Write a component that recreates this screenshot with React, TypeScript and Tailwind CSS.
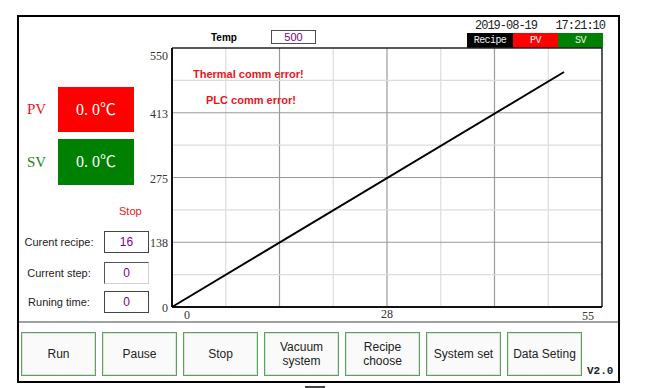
const buttons = ["Run", "Pause", "Stop", "Vacuum\nsystem", "Recipe\nchoose", "System set", "Data Seting"];

const plotLeft = 22;
const plotRight = 452;
const plotBottom = 259;

function TempChart() {
  const colW = (plotRight - plotLeft) / 8;
  const rowH = plotBottom / 8;
  const cols = [1, 2, 3, 4, 5, 6, 7];
  const rows = [1, 2, 3, 4, 5, 6, 7];

  return (
    <svg width={468} height={273} className="overflow-visible">
      {cols.map((i) => (
        <line
          key={"c" + i}
          x1={plotLeft + colW * i}
          x2={plotLeft + colW * i}
          y1={0}
          y2={plotBottom}
          stroke={i % 2 === 0 ? "#9a9a9a" : "#dcdcdc"}
          strokeWidth={1.2}
        />
      ))}
      {rows.map((j) => (
        <line
          key={"r" + j}
          x1={plotLeft}
          x2={plotRight}
          y1={rowH * j}
          y2={rowH * j}
          stroke={j % 2 === 0 ? "#9a9a9a" : "#dcdcdc"}
          strokeWidth={1.2}
        />
      ))}
      <line x1={plotLeft} x2={plotRight} y1={0} y2={0} stroke="#222" strokeWidth={1.5} />
      <line x1={plotRight} x2={plotRight} y1={0} y2={plotBottom} stroke="#222" strokeWidth={1.5} />
      <line x1={plotLeft} x2={plotLeft} y1={0} y2={plotBottom} stroke="#111" strokeWidth={2} />
      <line x1={plotLeft} x2={plotRight} y1={plotBottom} y2={plotBottom} stroke="#111" strokeWidth={2} />

      <line x1={plotLeft} y1={plotBottom} x2={414} y2={24} stroke="#000" strokeWidth={2} />

      <g fontFamily="'Liberation Serif', serif" fontSize={12} fill="#333" textAnchor="end" dominantBaseline="central">
        <text x={18} y={8}>550</text>
        <text x={18} y={66}>413</text>
        <text x={18} y={131}>275</text>
        <text x={18} y={195}>138</text>
        <text x={18} y={260}>0</text>
      </g>
      <g fontFamily="'Liberation Serif', serif" fontSize={12} fill="#333" textAnchor="middle" dominantBaseline="central">
        <text x={37} y={267}>0</text>
        <text x={237} y={266}>28</text>
        <text x={438} y={268}>55</text>
      </g>

      <g fontFamily="'Liberation Sans', Arial, sans-serif" fontSize={11} fontWeight="bold" fill="#e8161c" dominantBaseline="central">
        <text x={43} y={26}>Thermal comm error!</text>
        <text x={56} y={52}>PLC comm error!</text>
      </g>
    </svg>
  );
}

function ValueBox({ value, light }: { value: string; light?: boolean }) {
  return (
    <div
      className={
        light
          ? "ml-[5px] flex h-[22px] w-[45px] items-center justify-center border border-t-[#555] border-l-[#555] border-r-[#d0d0d0] border-b-[#d0d0d0] text-[12px] text-[#800080]"
          : "ml-[5px] flex h-[22px] w-[45px] items-center justify-center border border-[#444] text-[12px] text-[#800080]"
      }
    >
      {value}
    </div>
  );
}

function LeftPanel() {
  return (
    <div className="flex w-[131px] flex-col pt-[70px]">
      <div className="flex h-[45px] items-center">
        <span className="w-[39px] pl-[8px] font-['Liberation_Serif',serif] text-[15px] text-[#e0201e]">PV</span>
        <div className="flex h-full w-[76px] items-center justify-center bg-[#ff0000] font-['Liberation_Serif','Noto_Sans_CJK_SC',serif] text-[16px] text-white">
          0. 0℃
        </div>
      </div>
      <div className="mt-[7px] flex h-[46px] items-center">
        <span className="w-[39px] pl-[8px] font-['Liberation_Serif',serif] text-[15px] text-[#1d7f1d]">SV</span>
        <div className="flex h-full w-[76px] items-center justify-center bg-[#008000] font-['Liberation_Serif','Noto_Sans_CJK_SC',serif] text-[16px] text-white">
          0. 0℃
        </div>
      </div>
      <div className="mt-[19px] pl-[100px] text-[11px] leading-[14px] text-[#e8161c]">Stop</div>
      <div className="mt-[13px] flex items-center">
        <span className="w-[80px] text-center text-[11px] text-[#222]">Curent recipe:</span>
        <ValueBox value="16" />
      </div>
      <div className="mt-[9px] flex items-center">
        <span className="w-[80px] text-center text-[11px] text-[#222]">Current step:</span>
        <ValueBox value="0" light />
      </div>
      <div className="mt-[7px] flex items-center">
        <span className="w-[80px] text-center text-[11px] text-[#222]">Runing time:</span>
        <ValueBox value="0" />
      </div>
    </div>
  );
}

function ChartPanel() {
  return (
    <div className="flex w-[468px] flex-col">
      <div className="flex h-[31px] items-start">
        <div className="w-[121px] pl-[61px] pt-[15px] text-[10px] font-bold leading-[12px] text-black">Temp</div>
        <div className="mt-[13px] flex h-[14px] w-[45px] items-center justify-center border border-[#4a4a5a] text-[11px] leading-none text-[#800080]">
          500
        </div>
        <div className="ml-auto mr-[13px] flex w-[138px] flex-col">
          <div className="mt-[3px] flex h-[13px] justify-between pl-[8px] font-['Liberation_Mono',monospace] text-[12px] leading-[13px] tracking-[-1px] text-[#222]">
            <span>2019-08-19</span>
            <span>17:21:10</span>
          </div>
          <div className="flex h-[15px] w-[136px] font-['Liberation_Mono',monospace] text-[10px] leading-[15px] tracking-[-0.6px] text-[#f0f0f0]">
            <div className="w-[46px] bg-black text-center">Recipe</div>
            <div className="w-[45px] bg-[#ff0000] text-center">PV</div>
            <div className="w-[45px] bg-[#008000] text-center">SV</div>
          </div>
        </div>
      </div>
      <TempChart />
    </div>
  );
}

function ButtonBar() {
  return (
    <div className="flex h-[58px] items-start gap-[6px] pl-[2px] pt-[9px]">
      {buttons.map((b) => (
        <button
          key={b}
          className="flex h-[44px] w-[75px] items-center justify-center whitespace-pre-line border border-[#5f9f5f] bg-[#fafafa] text-center text-[12px] leading-[14px] text-[#222] shadow-[inset_0_0_0_1px_#d6e8d6]"
        >
          {b}
        </button>
      ))}
      <span className="-ml-[1px] self-end pb-[4px] font-['Liberation_Mono',monospace] text-[11px] font-bold leading-[11px] text-[#222]">
        V2.0
      </span>
    </div>
  );
}

export default function App() {
  return (
    <div className="min-h-screen bg-white pl-[17px] pt-[15px] font-['Liberation_Sans',Arial,sans-serif]">
      <div className="flex h-[368px] w-[603px] flex-col border-2 border-black">
        <div className="flex h-[304px]">
          <LeftPanel />
          <ChartPanel />
        </div>
        <div className="h-[2px] bg-[#a0a0a0]" />
        <ButtonBar />
      </div>
      <div className="ml-[288px] mt-[3px] h-[2px] w-[20px] bg-[#444]" />
    </div>
  );
}
